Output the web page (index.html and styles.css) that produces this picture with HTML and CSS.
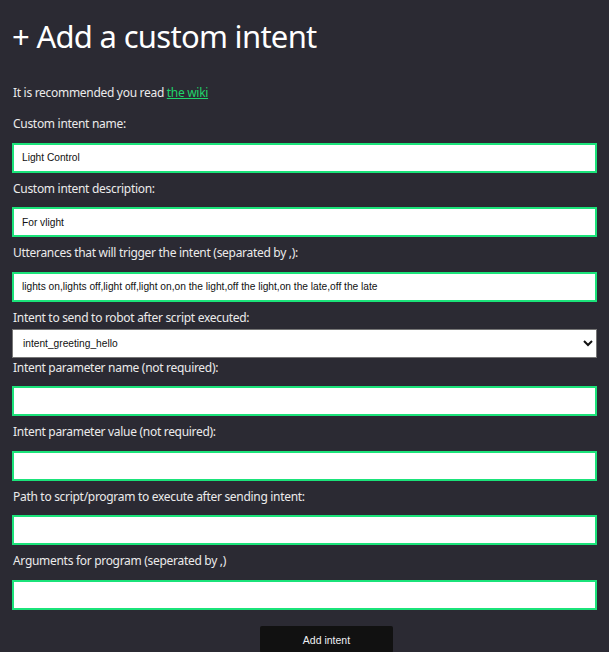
FILE: index.html
```html
<!DOCTYPE html>
<html>
<head>
<meta charset="utf-8">
<link rel="stylesheet" href="styles.css">
</head>
<body>
<main class="page">
  <h1 class="title">+ Add a custom intent</h1>
  <p class="intro">It is recommended you read <a class="wiki" href="#">the wiki</a></p>
  <form class="form">
    <label class="lbl">Custom intent name:</label>
    <input class="field" type="text" value="Light Control">
    <label class="lbl">Custom intent description:</label>
    <input class="field" type="text" value="For vlight">
    <label class="lbl">Utterances that will trigger the intent (separated by ,):</label>
    <input class="field" type="text" value="lights on,lights off,light off,light on,on the light,off the light,on the late,off the late">
    <label class="lbl lbl-sel">Intent to send to robot after script executed:</label>
    <select class="pick"><option>intent_greeting_hello</option></select>
    <label class="lbl">Intent parameter name (not required):</label>
    <input class="field" type="text">
    <label class="lbl">Intent parameter value (not required):</label>
    <input class="field" type="text">
    <label class="lbl">Path to script/program to execute after sending intent:</label>
    <input class="field" type="text">
    <label class="lbl">Arguments for program (seperated by ,)</label>
    <input class="field" type="text">
    <div class="actions"><button class="btn" type="button">Add intent</button></div>
  </form>
</main>
</body>
</html>
```
FILE: styles.css
```css
html, body {
  margin: 0;
  padding: 0;
  background: #2b2a33;
}
body {
  color: #ebebeb;
  font-family: "Noto Sans", "Open Sans", sans-serif;
}
.page {
  padding: 0 12px 20px;
}
.title {
  margin: 17px 0 0;
  font-size: 31px;
  line-height: 38px;
  font-weight: 400;
  letter-spacing: -0.7px;
  color: #ffffff;
}
.intro {
  margin: 28px 0 0;
  font-size: 12px;
  line-height: 19px;
  letter-spacing: -0.3px;
  padding-left: 1px;
}
.wiki {
  color: #1fd46a;
  text-decoration: underline;
}
.form {
  display: flex;
  flex-direction: column;
  align-items: stretch;
  margin: 12px 0 0;
}
.lbl {
  display: block;
  font-size: 12px;
  line-height: 19px;
  letter-spacing: -0.3px;
  padding-left: 1px;
}
.field {
  box-sizing: border-box;
  height: 30px;
  margin: 9.5px 0 6px;
  border: 2px solid #1be37a;
  background: #ffffff;
  padding: 0 8px;
  font-family: "Liberation Sans", Arial, sans-serif;
  font-size: 10.2px;
  color: #111;
  outline: none;
}
.lbl-sel {
  margin-bottom: 2.5px;
}
.pick {
  box-sizing: border-box;
  height: 29px;
  margin: 0 0 -0.5px;
  border: 1px solid #767676;
  background: #ffffff;
  padding: 0 6px;
  font-family: "Liberation Sans", Arial, sans-serif;
  font-size: 10.2px;
  color: #111;
}
.actions {
  display: flex;
  justify-content: flex-start;
  padding-left: 248px;
  margin-top: 10.5px;
}
.btn {
  display: flex;
  align-items: center;
  justify-content: center;
  width: 133px;
  height: 27px;
  padding: 0;
  border: none;
  border-radius: 2px;
  background: #111111;
  color: #eef0f4;
  font-family: "Liberation Sans", Arial, sans-serif;
  font-size: 10.5px;
}
```
